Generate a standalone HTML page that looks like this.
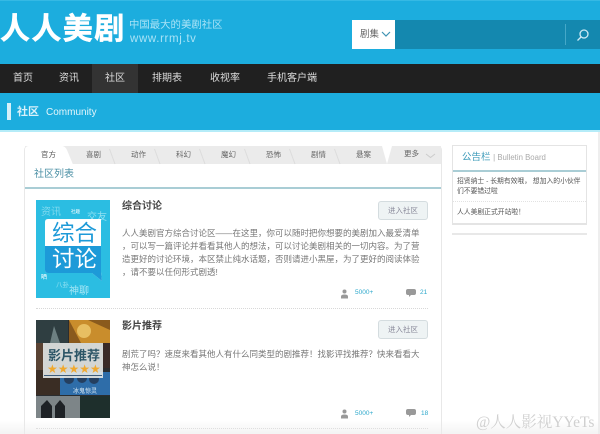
<!DOCTYPE html>
<html><head><meta charset="utf-8"><style>
*{margin:0;padding:0;box-sizing:border-box}
html,body{width:600px;height:434px;overflow:hidden;background:#fff}
body{position:relative;font-family:"Liberation Sans","Noto Sans CJK SC",sans-serif;color:#666;filter:blur(.3px)}
.a{position:absolute;white-space:nowrap}
.nav{top:73px;font-size:10px;line-height:12px;color:#ddd}
.tab{position:absolute;top:146px;height:18px;font-size:7.5px;line-height:18px;text-align:center;color:#666;width:41px}
.body{font-size:8.5px;line-height:13px;color:#777}
.btn{position:absolute;left:378px;width:50px;height:19px;background:#eef3f4;border:1px solid #d4dcdf;border-radius:3px;color:#889;font-size:7.5px;line-height:17px;text-align:center}
.dot{position:absolute;left:36px;width:392px;border-top:1px dotted #d8d8d8}
.t{font-size:10px;font-weight:bold;color:#444;line-height:14px}
.n{font-size:6.5px;color:#2fa9cc;line-height:10px}
</style></head><body>
<div class="a" style="left:0;top:0;width:600px;height:131px;background:#1cadde"></div>
<div class="a" style="left:0;top:0;width:600px;height:1px;background:#35b9e4"></div>
<div class="a" style="left:0;top:13px;font-size:30px;line-height:34px;font-weight:bold;color:#fff;letter-spacing:1.4px;-webkit-text-stroke:.5px #fff">人人美剧</div>
<div class="a" style="left:129px;top:19px;font-size:10.4px;line-height:13px;color:#a8e2f6">中国最大的美剧社区</div>
<div class="a" style="left:130px;top:32px;font-size:11.5px;line-height:14px;color:#a8e2f6;letter-spacing:.65px">www.rrmj.tv</div>
<div class="a" style="left:352px;top:20px;width:43px;height:29px;background:#fff"></div>
<div class="a" style="left:395px;top:20px;width:205px;height:29px;background:#1488af"></div>
<div class="a" style="left:360px;top:28px;font-size:9.5px;line-height:13px;color:#666">剧集</div>
<svg class="a" style="left:381px;top:31px" width="10" height="7"><path d="M1 1L5 5L9 1" fill="none" stroke="#3f93b3" stroke-width="1.2"/></svg>
<div class="a" style="left:565px;top:24px;width:1px;height:21px;background:#45a8c8"></div>
<svg class="a" style="left:576px;top:28px" width="14" height="14"><circle cx="8" cy="6" r="4" fill="none" stroke="#cdeaf5" stroke-width="1.3"/><path d="M5 9L1.500 12.500" stroke="#cdeaf5" stroke-width="1.3"/></svg>
<div class="a" style="left:0;top:64px;width:600px;height:29px;background:#202020"></div>
<div class="a" style="left:92px;top:64px;width:46px;height:29px;background:#333"></div>
<div class="a nav" style="left:13px">首页</div>
<div class="a nav" style="left:59px">资讯</div>
<div class="a nav" style="left:105px">社区</div>
<div class="a nav" style="left:152px">排期表</div>
<div class="a nav" style="left:210px">收视率</div>
<div class="a nav" style="left:267px">手机客户端</div>
<div class="a" style="left:7px;top:103px;width:4px;height:17px;background:#d7f0f9"></div>
<div class="a" style="left:17px;top:105px;font-size:11px;line-height:14px;font-weight:bold;color:#d9f1fa">社区</div>
<div class="a" style="left:46px;top:106px;font-size:10px;line-height:13px;color:#e2f5fb">Community</div>
<div class="a" style="left:0;top:130px;width:600px;height:1.500px;background:#b5ecf8"></div>

<div class="a" style="left:598px;top:132px;width:2px;height:302px;background:#eee"></div>
<div class="a" style="left:24px;top:146px;width:418px;height:288px;border:1.500px solid #e8e8e8;border-bottom:0;border-radius:4px 4px 0 0"></div>
<svg class="a" style="left:25px;top:146px" width="416" height="19" viewBox="0 0 416 19">
<rect width="416" height="18" fill="#ebebeb"/>
<path d="M0 18.500V4Q0 0 4 0H37Q40 0 42 4L48 18.500Z" fill="#fff"/>
<path d="M90 18L84.500 3M135 18L129.500 3M180 18L174.500 3M225 18L219.500 3M270 18L264.500 3M315 18L309.500 3" stroke="#dcdcdc" fill="none"/>
<path d="M357 0H367L362 18Z" fill="#fff"/>
</svg>
<div class="tab" style="left:73px">喜剧</div>
<div class="tab" style="left:118px">动作</div>
<div class="tab" style="left:163px">科幻</div>
<div class="tab" style="left:208px">魔幻</div>
<div class="tab" style="left:253px">恐怖</div>
<div class="tab" style="left:298px">剧情</div>
<div class="tab" style="left:343px">悬案</div>
<div class="tab" style="left:404px;width:20px;text-align:left;line-height:16px">更多</div>
<svg class="a" style="left:425px;top:153px" width="11" height="6"><path d="M1 1L5.500 4.500L10 1" fill="none" stroke="#ccc"/></svg>
<div class="a" style="left:41px;top:146px;font-size:7.5px;line-height:18px;color:#555">官方</div>
<div class="a" style="left:34px;top:168px;font-size:10px;line-height:14px;color:#4a8fa4">社区列表</div>
<div class="a" style="left:25px;top:187px;width:416px;height:1.500px;background:#a9cdd5"></div>

<svg class="a" style="left:36px;top:200px" width="74" height="98" viewBox="0 0 74 98">
<rect width="74" height="98" fill="#2bbde2"/>
<text x="5" y="15" font-size="10" fill="#7fd9ee" font-family="Noto Sans CJK SC">资讯</text>
<text x="35" y="13" font-size="4.500" fill="#fff" font-family="Noto Sans CJK SC">社趣</text>
<text x="51" y="20" font-size="10" fill="#8fe0f2" font-family="Noto Sans CJK SC">交友</text>
<path d="M12 19H65V72L66 81L56 73H12Q9 73 9 70V22Q9 19 12 19Z" fill="#fff"/>
<path d="M9 46H65V72L66 81L56 73H12Q9 73 9 70Z" fill="#1d9ad8"/>
<text x="16" y="41" font-size="22.500" fill="#1d9ad8" font-family="Noto Sans CJK SC">综合</text>
<text x="16" y="67" font-size="22.500" fill="#fff" font-family="Noto Sans CJK SC">讨论</text>
<text x="5" y="79" font-size="6" fill="#fff" font-family="Noto Sans CJK SC">晒</text>
<text x="20" y="87" font-size="6.500" fill="#8fe0f2" font-family="Noto Sans CJK SC">八卦</text>
<text x="33" y="94" font-size="10" fill="#a5e6f5" font-family="Noto Sans CJK SC">神聊</text>
</svg>
<div class="a t" style="left:122px;top:200px">综合讨论</div>
<div class="btn" style="top:201px">进入社区</div>
<div class="a body" style="left:122px;top:227px">人人美剧官方综合讨论区——在这里，你可以随时把你想要的美剧加入最爱清单<br>，可以写一篇评论并看看其他人的想法，可以讨论美剧相关的一切内容。为了营<br>造更好的讨论环境，本区禁止纯水话题，否则请进小黑屋，为了更好的阅读体验<br>，请不要以任何形式剧透!</div>
<svg class="a" style="left:340px;top:289px" width="9" height="10"><circle cx="4.500" cy="2.500" r="2" fill="#999"/><path d="M1 9.500V7.500Q1 5.500 4.500 5.500Q8 5.500 8 7.500V9.500Z" fill="#999"/></svg>
<div class="a n" style="left:355px;top:288px">5000+</div>
<svg class="a" style="left:406px;top:289px" width="10" height="9"><path d="M2 0H8Q10 0 10 2V4Q10 6 8 6H5L3 8V6H2Q0 6 0 4V2Q0 0 2 0Z" fill="#999"/></svg>
<div class="a n" style="left:420px;top:288px">21</div>
<div class="dot" style="top:308px"></div>

<svg class="a" style="left:36px;top:320px" width="74" height="98" viewBox="0 0 74 98">
<rect width="74" height="98" fill="#2a2d30"/>
<rect width="32" height="23" fill="#2f3e41"/>
<path d="M14 23L18 6L24 23Z" fill="#6d8082"/>
<rect x="33" width="41" height="23" fill="#8a5a1d"/>
<path d="M33 0H52L74 10V23H45Z" fill="#c98d2c"/>
<circle cx="48" cy="11" r="7" fill="#e8bf62"/>
<rect y="23" width="8" height="50" fill="#5a4334"/>
<rect x="67" y="23" width="7" height="25" fill="#3a2b28"/>
<rect x="24" y="52" width="50" height="23" fill="#2e6da9"/>
<circle cx="33" cy="59" r="5" fill="#253f5f"/><circle cx="46" cy="58" r="5" fill="#253f5f"/><circle cx="58" cy="59" r="5" fill="#253f5f"/>
<rect y="50" width="24" height="25" fill="#3a2d24"/>
<rect y="76" width="44" height="22" fill="#7d8588"/>
<path d="M5 98V86L11 80L16 86V98ZM19 98V86L24 80L29 86V98Z" fill="#1e2226"/>
<rect x="44" y="76" width="30" height="22" fill="#1e2f2c"/>
<rect x="7" y="23" width="60" height="35" fill="#e6e9e8" opacity=".9"/>
<text x="12" y="40" font-size="13" font-weight="bold" fill="#2d5667" font-family="Noto Sans CJK SC">影片推荐</text>
<text x="11" y="53" font-size="12" fill="#f0a92f" font-family="DejaVu Sans">★★★★★</text>
<rect x="8" y="55" width="58" height="1" fill="#3d5c7a"/>
<text x="37" y="73" font-size="6" fill="#dcebf5" font-family="Noto Sans CJK SC">冰鬼惊灵</text>
</svg>
<div class="a t" style="left:122px;top:320px">影片推荐</div>
<div class="btn" style="top:320px">进入社区</div>
<div class="a body" style="left:122px;top:348px">剧荒了吗？速度来看其他人有什么同类型的剧推荐！找影评找推荐？快来看看大<br>神怎么说！</div>
<svg class="a" style="left:340px;top:409px" width="9" height="10"><circle cx="4.500" cy="2.500" r="2" fill="#999"/><path d="M1 9.500V7.500Q1 5.500 4.500 5.500Q8 5.500 8 7.500V9.500Z" fill="#999"/></svg>
<div class="a n" style="left:355px;top:409px">5000+</div>
<svg class="a" style="left:406px;top:409px" width="10" height="9"><path d="M2 0H8Q10 0 10 2V4Q10 6 8 6H5L3 8V6H2Q0 6 0 4V2Q0 0 2 0Z" fill="#999"/></svg>
<div class="a n" style="left:421px;top:409px">18</div>
<div class="dot" style="top:428px"></div>

<div class="a" style="left:452px;top:145px;width:135px;height:80px;border:1px solid #e4e4e4;border-bottom:2px solid #e4e4e4"></div>
<div class="a" style="left:462px;top:151px;font-size:9.500px;line-height:14px;color:#3f9cba">公告栏 <span style="font-size:7.800px;color:#aaa">| Bulletin Board</span></div>
<div class="a" style="left:453px;top:170px;width:133px;height:1.500px;background:#a9cdd5"></div>
<div class="a" style="left:457px;top:177px;font-size:6.800px;line-height:10px;color:#555">招贤纳士 - 长期有效哦， 想加入的小伙伴<br>们不要错过啦</div>
<div class="a" style="left:453px;top:201px;width:133px;border-top:1px dotted #e2e2e2"></div>
<div class="a" style="left:457px;top:207px;font-size:6.800px;line-height:12px;color:#555">人人美剧正式开站啦！</div>
<div class="a" style="left:452px;top:233px;width:135px;height:2px;background:#e8e8e8"></div>
<div class="a" style="left:0;top:420px;width:600px;height:14px;background:linear-gradient(rgba(240,240,240,0),rgba(235,235,235,.6))"></div>
<div class="a" style="left:476px;top:414px;font-size:15.500px;line-height:18px;color:#d0d0d0;font-family:'Liberation Serif','Noto Serif CJK SC',serif">@人人影视YYeTs</div>
</body></html>
